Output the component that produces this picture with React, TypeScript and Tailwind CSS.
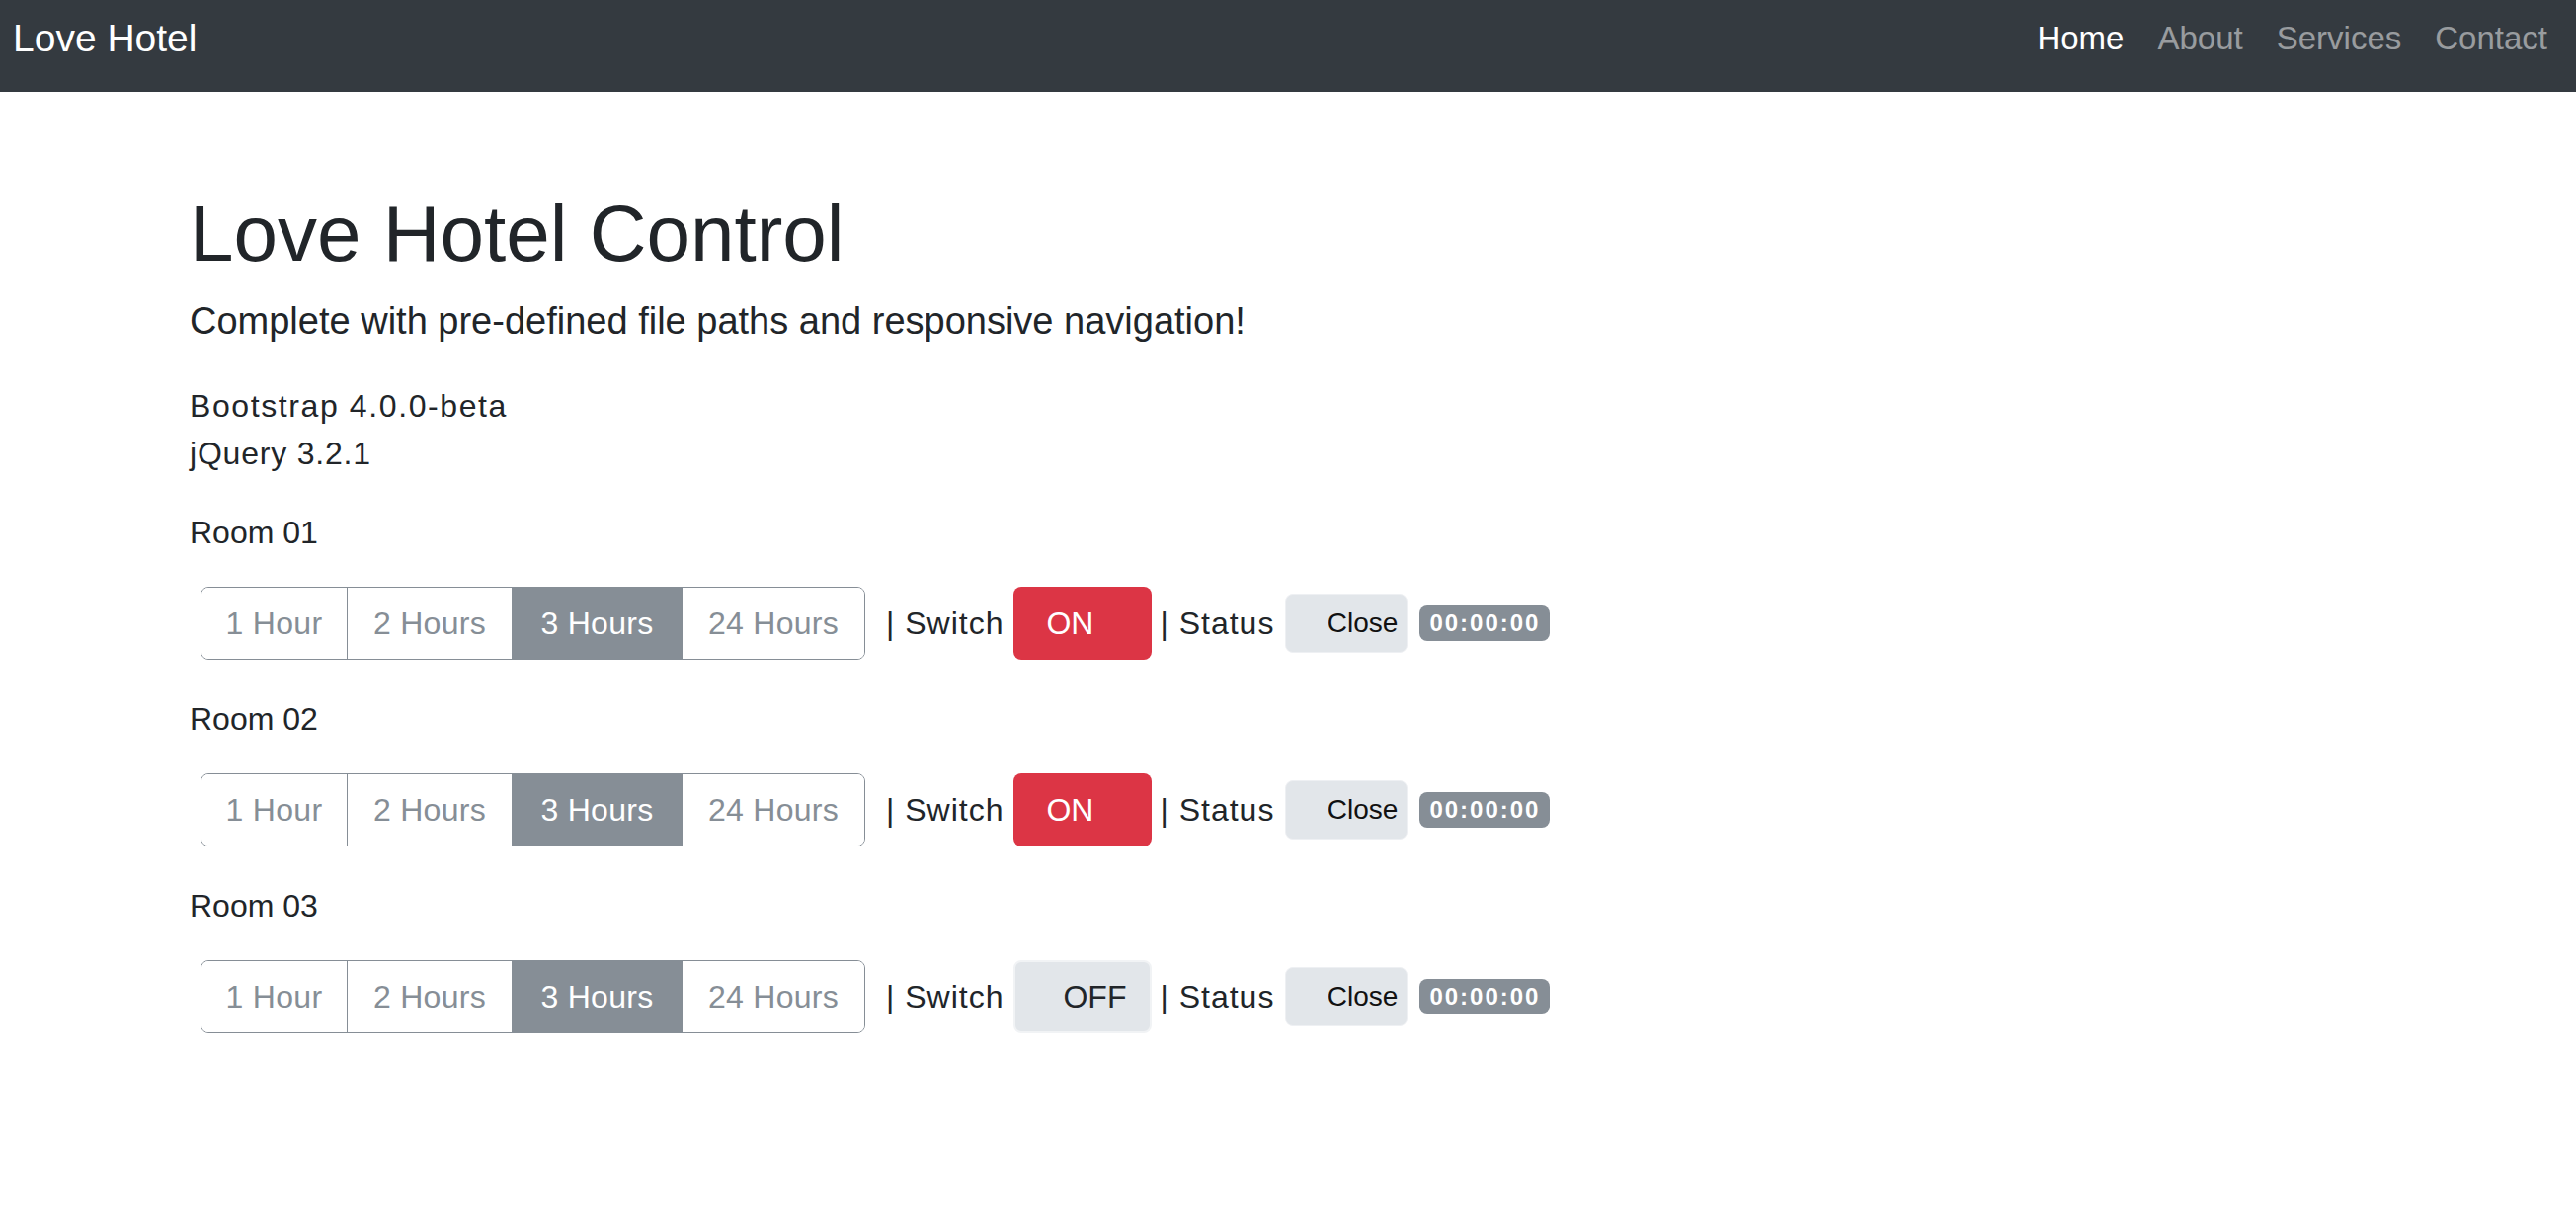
import React from "react";

const hours = [
  { label: "1 Hour", w: "w-[147px]" },
  { label: "2 Hours", w: "w-[167px]" },
  { label: "3 Hours", w: "w-[172px]" },
  { label: "24 Hours", w: "w-[185px]" },
];

function HourGroup() {
  return (
    <div className="ml-[11px] flex h-[74px] overflow-hidden rounded-[8px] border border-[#868e96]">
      {hours.map((h, i) => {
        const active = h.label === "3 Hours";
        return (
          <div
            key={h.label}
            className={
              (i === 0 ? "" : "border-l border-[#868e96] ") +
              h.w +
              " flex h-full items-center justify-center text-[32px] leading-[48px] tracking-[0.3px] " +
              (active ? "bg-[#868e96] text-white" : "bg-white text-[#868e96]")
            }
          >
            {h.label}
          </div>
        );
      })}
    </div>
  );
}

function Row({ on }: { on: boolean }) {
  return (
    <div className="mb-[36px] flex h-[74px] items-center">
      <HourGroup />
      <span className="ml-[21px] text-[32px] leading-[48px] tracking-[1px] text-[#212529]">| Switch</span>
      {on ? (
        <div className="ml-[10px] flex h-[74px] w-[140px] items-center rounded-[8px] bg-[#dc3545] pl-[33px] text-[32px] leading-[48px] text-white">
          ON
        </div>
      ) : (
        <div className="ml-[10px] flex h-[74px] w-[140px] items-center rounded-[8px] border-2 border-[#f1f3f5] bg-[#e2e6ea] pl-[48px] text-[32px] leading-[48px] text-[#212529]">
          OFF
        </div>
      )}
      <span className="ml-[8px] text-[32px] leading-[48px] tracking-[1px] text-[#212529]">| Status</span>
      <div className="ml-[11px] flex h-[60px] w-[124px] items-center justify-end rounded-[8px] border border-[#eef0f3] bg-[#e2e6ea] pr-[9px] text-[28px] leading-[42px] text-[#111]">
        Close
      </div>
      <span className="ml-[12px] flex h-[36px] items-center rounded-[8px] bg-[#868e96] px-[10px] text-[24px] font-bold leading-[36px] tracking-[2px] text-white">
        00:00:00
      </span>
    </div>
  );
}

export default function App() {
  return (
    <div className="min-h-screen bg-white font-['Liberation_Sans',Arial,sans-serif] text-[#212529]">
      <nav className="flex h-[93px] items-start justify-between bg-[#343a40] pl-[13px] pr-[29px]">
        <div className="pt-[15px] text-[39px] leading-[48px] text-white">Love Hotel</div>
        <ul className="flex pt-[15px] text-[33px] leading-[48px]">
          <li className="px-[17px] text-white">Home</li>
          <li className="px-[17px] text-white/50">About</li>
          <li className="px-[17px] text-white/50">Services</li>
          <li className="pl-[17px] text-white/50">Contact</li>
        </ul>
      </nav>
      <main className="pl-[192px] pt-[100px]">
        <h1 className="mb-[14px] text-[80px] font-normal leading-[88px]">Love Hotel Control</h1>
        <p className="mb-[32px] text-[38px] font-light leading-[60px]">
          Complete with pre-defined file paths and responsive navigation!
        </p>
        <div className="mb-[32px] text-[32px] leading-[48px]">
          <div className="tracking-[1.6px]">Bootstrap 4.0.0-beta</div>
          <div className="tracking-[0.8px]">jQuery 3.2.1</div>
        </div>
        <p className="mb-[31px] text-[32px] leading-[48px]">Room 01</p>
        <Row on={true} />
        <p className="mb-[31px] text-[32px] leading-[48px]">Room 02</p>
        <Row on={true} />
        <p className="mb-[31px] text-[32px] leading-[48px]">Room 03</p>
        <Row on={false} />
      </main>
    </div>
  );
}
